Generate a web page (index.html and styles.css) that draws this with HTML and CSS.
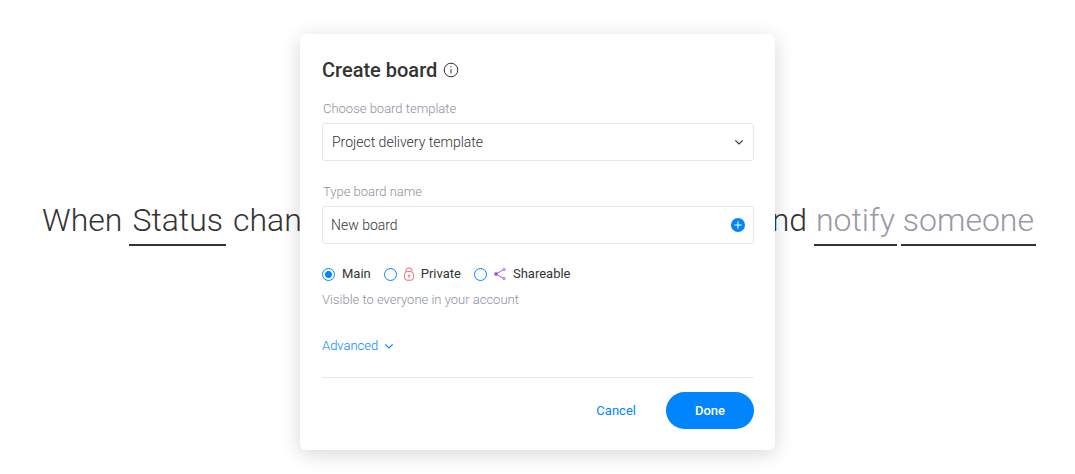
FILE: index.html
```html
<!DOCTYPE html>
<html lang="en">
<head>
  <meta charset="UTF-8">
  <meta name="viewport" content="width=device-width, initial-scale=1.0">
  <title>Create board</title>
  <link rel="stylesheet" href="styles.css">
</head>
<body>
  <div class="recipe">
    <div class="recipe-part">
      <span>When</span>
      <span class="slot">Status</span>
      <span>changes</span>
    </div>
    <div class="recipe-part">
      <span>and</span>
      <span class="slot empty">notify</span>
      <span class="slot empty">someone</span>
    </div>
  </div>

  <form class="dialog" role="dialog" aria-labelledby="dialog-title">
    <header class="dialog-header">
      <h1 id="dialog-title">Create board</h1>
      <svg class="info" viewBox="0 0 16 16" aria-hidden="true">
        <circle cx="8" cy="8" r="6.8"/>
        <path d="M8 7v4.5M8 4.3v1.2"/>
      </svg>
    </header>

    <div class="field">
      <label for="template">Choose board template</label>
      <div class="control">
        <select id="template">
          <option>Project delivery template</option>
        </select>
        <svg class="chevron" viewBox="0 0 12 12" aria-hidden="true"><path d="M2.3 4.3L6 8l3.7-3.7"/></svg>
      </div>
    </div>

    <div class="field">
      <label for="board-name">Type board name</label>
      <div class="control">
        <input id="board-name" type="text" value="New board">
        <button type="button" class="add" aria-label="Add">
          <svg viewBox="0 0 14 14"><circle cx="7" cy="7" r="7"/><path d="M7 3.3v7.4M3.3 7h7.4"/></svg>
        </button>
      </div>
    </div>

    <div class="kinds">
      <label class="kind">
        <input type="radio" name="kind" checked>
        <span>Main</span>
      </label>
      <label class="kind">
        <input type="radio" name="kind">
        <svg class="lock" viewBox="0 0 10 14" aria-hidden="true">
          <rect x="0.6" y="4.6" width="8.8" height="8.6" rx="2.6"/>
          <path d="M2 4.8V3Q2 0.9 5 0.9T8 3v1M5 8.4v2.8M3.8 8.4h2.4"/>
        </svg>
        <span>Private</span>
      </label>
      <label class="kind">
        <input type="radio" name="kind">
        <svg class="share" viewBox="0 0 12 12" aria-hidden="true">
          <path d="M8.8 2L2 6l6.8 4"/>
          <circle class="dot" cx="2" cy="6" r="1.4"/>
          <circle cx="10" cy="1.5" r="1.1"/>
          <circle cx="10" cy="10.5" r="1.1"/>
        </svg>
        <span>Shareable</span>
      </label>
    </div>
    <p class="hint">Visible to everyone in your account</p>

    <button type="button" class="advanced">
      Advanced
      <svg class="chevron" viewBox="0 0 12 12" aria-hidden="true"><path d="M2.3 4.3L6 8l3.7-3.7"/></svg>
    </button>

    <footer class="actions">
      <button type="button" class="cancel">Cancel</button>
      <button type="submit" class="done">Done</button>
    </footer>
  </form>
</body>
</html>
```

FILE: styles.css
```css
* {
  box-sizing: border-box;
}
body {
  margin: 0;
  min-height: 100vh;
  padding: 34px 20px 24px;
  font-family: Roboto, sans-serif;
  font-size: 13px;
  line-height: 16px;
  color: #333333;
  background-color: #ffffff;
}
button, input, select {
  font: inherit;
  color: inherit;
}
button {
  padding: 0;
  border: none;
  background: none;
  cursor: pointer;
}
svg {
  flex: none;
  fill: none;
  stroke: currentColor;
}

/* automation sentence behind the dialog */
.recipe {
  position: absolute;
  top: 196px;
  left: 42px;
  right: 39px;
  display: flex;
  justify-content: space-between;
  font-size: 32px;
  font-weight: 300;
  line-height: 48px;
}
.recipe-part {
  display: flex;
  gap: 7px;
}
.slot {
  padding: 0 3px;
  border-bottom: 2px solid #323338;
}
.slot + .slot {
  margin-left: -3px;
}
.slot.empty {
  padding: 0 2px;
  color: #9699a6;
}

.dialog {
  position: relative;
  max-width: 475px;
  margin: 0 auto;
  padding: 24px 21px 21px 22px;
  border-radius: 6px;
  background-color: #ffffff;
  box-shadow: 0 4px 20px rgba(0, 0, 0, 0.16);
}
.dialog-header {
  display: flex;
  align-items: center;
  gap: 6px;
  margin-bottom: 18px;
}
h1 {
  margin: 0;
  font-size: 20px;
  font-weight: 500;
  line-height: 24px;
}
.info {
  width: 16px;
  height: 16px;
}

.field {
  margin-bottom: 22px;
}
.field label {
  display: block;
  padding: 1px 0 6px 1px;
  font-weight: 300;
  color: #8d8f9e;
}
.control {
  display: flex;
  align-items: center;
  height: 38px;
  padding: 0 8px;
  border: 1px solid #e6e6f0;
  border-radius: 3px;
}
.control select, .control input {
  flex: 1;
  min-width: 0;
  height: 36px;
  padding: 0;
  border: none;
  outline: none;
  appearance: none;
  background: none;
  font-size: 14px;
  font-weight: 300;
}
.control select {
  padding-left: 1px;
}
.chevron {
  width: 12px;
  height: 12px;
  stroke-width: 1.2;
}
.add {
  width: 14px;
  height: 14px;
}
.add svg {
  display: block;
  fill: #0085ff;
  stroke: none;
}
.add path {
  stroke: #ffffff;
}

.kinds {
  display: flex;
  gap: 13px;
  margin-bottom: 10px;
}
.kind {
  display: flex;
  align-items: center;
  gap: 7px;
}
.kind input {
  appearance: none;
  width: 13px;
  height: 13px;
  margin: 0;
  border: 1px solid #0085ff;
  border-radius: 50%;
}
.kind input:checked {
  background: radial-gradient(circle, #0085ff 3px, transparent 4px);
}
.lock {
  width: 10px;
  height: 14px;
  color: #e8677b;
}
.share {
  width: 12px;
  height: 12px;
  color: #a25ddc;
}
.share .dot {
  fill: currentColor;
}
.hint {
  margin: 0 0 30px;
  font-weight: 300;
  color: #8d8f9e;
}

.advanced {
  display: flex;
  align-items: center;
  gap: 5px;
  margin-bottom: 23px;
  color: #0085ff;
  font-weight: 300;
}
.actions {
  display: flex;
  justify-content: flex-end;
  align-items: center;
  gap: 30px;
  padding-top: 14px;
  border-top: 1px solid #e6e6f0;
}
.cancel {
  color: #0085ff;
}
.done {
  padding: 0 29px;
  border-radius: 19px;
  font-weight: 500;
  line-height: 37px;
  color: #ffffff;
  background-color: #0085ff;
}
```
